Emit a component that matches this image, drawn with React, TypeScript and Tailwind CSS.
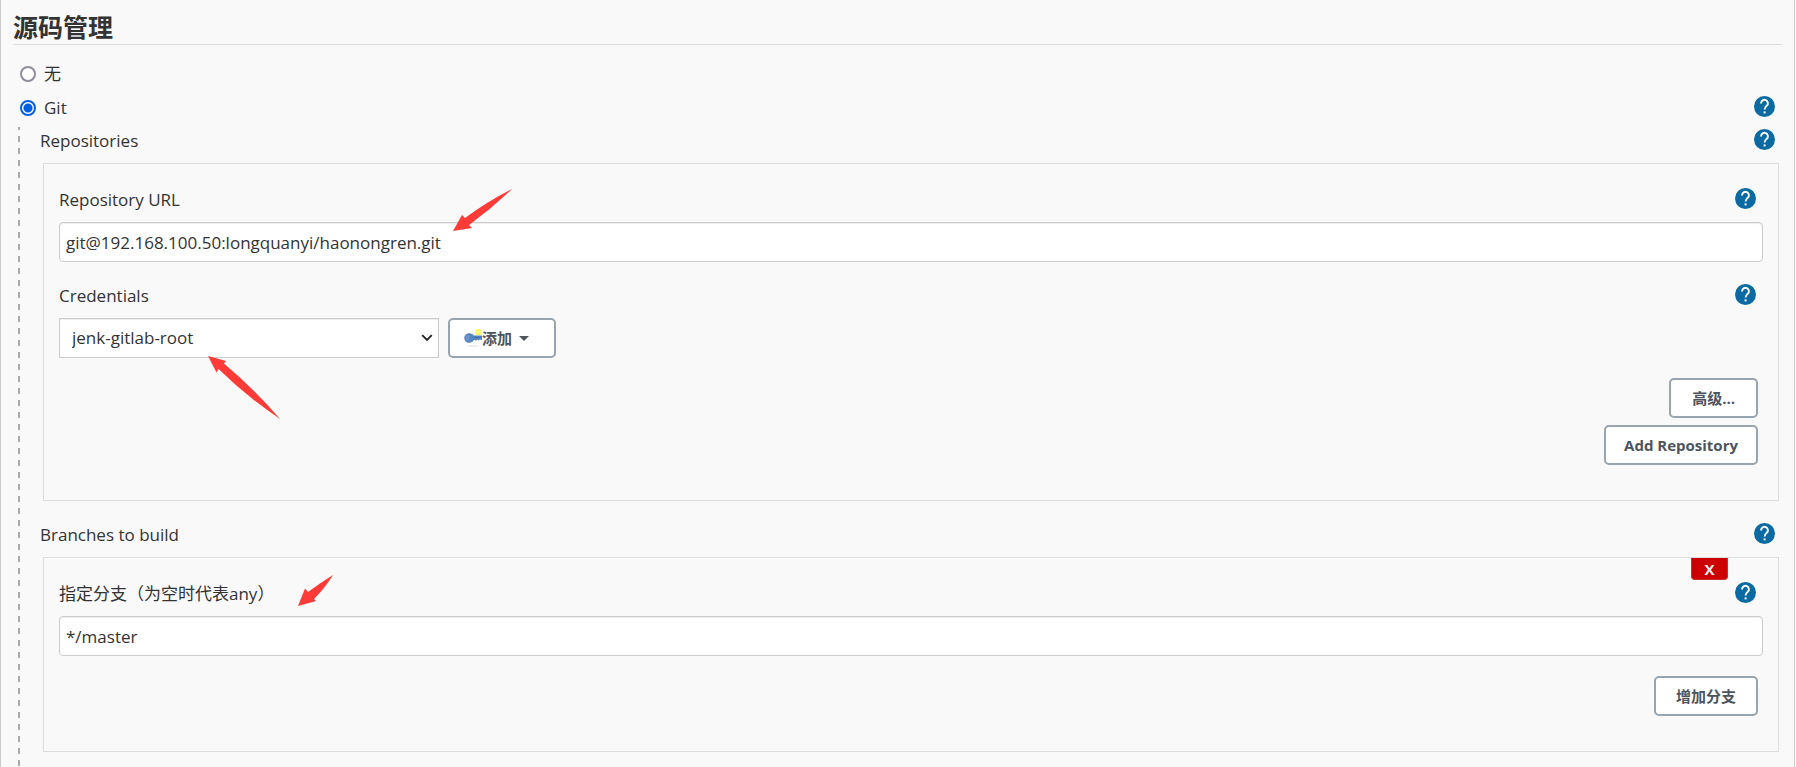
import React from "react";

const baseFont = "font-['Open_Sans','Noto_Sans_CJK_SC',sans-serif]";

function Help({ topic }: { topic: string }) {
  return (
    <a href="#help" aria-label={`Help: ${topic}`} className="mb-1 block size-[21px] shrink-0">
      <svg viewBox="0 0 21 21" className="block size-full">
        <circle cx="10.5" cy="10.5" r="10.5" fill="#0b6aa2" />
        <path
          d="M7.1 7.6V7.1a3.4 3.4 0 1 1 5.8 2.5c-1.3 1.2-2.3 1.9-2.3 4"
          fill="none"
          stroke="#fff"
          strokeWidth="1.9"
        />
        <rect x="9.6" y="15.4" width="2" height="2" fill="#fff" />
      </svg>
    </a>
  );
}

function Button({ children, className = "" }: { children: React.ReactNode; className?: string }) {
  return (
    <button
      type="button"
      className={`flex h-10 items-center rounded-[5px] border-2 border-[#98a4ae] bg-white text-[15px] font-bold text-[#4d545d] ${className}`}
    >
      {children}
    </button>
  );
}

function KeyIcon() {
  return (
    <svg viewBox="0 0 18 18" className="size-[18px]" aria-hidden="true">
      <ellipse cx="9" cy="17" rx="6.5" ry="0.9" fill="#ececec" />
      <circle cx="14.2" cy="3.2" r="3.1" fill="#fdf45c" />
      <circle cx="14.2" cy="3.2" r="1" fill="#fffcd8" />
      <path
        d="M5.2 4.2c2.4 0 3.900 1 4.600 2.200H18V11H16.800L15.800 10.400l-1.300 1.200-1.400-.9-1.200 1-1.200-.6H9.800C9 12.800 7.400 13.800 5.200 13.800 2.200 13.800.3 11.600.3 9S2.200 4.200 5.200 4.200z"
        fill="#5888c2"
      />
      <path d="M9.500 8.400H17.500" stroke="#426fa9" strokeWidth="1.2" />
      <ellipse cx="3.600" cy="8.800" rx="1.800" ry="2.800" fill="#6c97cb" />
    </svg>
  );
}

function Radio({ id, label, checked }: { id: string; label: string; checked?: boolean }) {
  return (
    <div className="flex h-[34px] items-center">
      <input
        id={id}
        type="radio"
        name="scm"
        defaultChecked={checked}
        className="size-4 appearance-none rounded-full border-2 border-[#8f8f9d] bg-white checked:border-[#0060df] checked:bg-[radial-gradient(circle,#0060df_4px,#fff_5px)]"
      />
      <label htmlFor={id} className="pl-2">
        {label}
      </label>
    </div>
  );
}

const fieldClass =
  "block h-10 w-full rounded-[4px] border border-[#ccc] bg-white px-1.5 shadow-[inset_0_1px_1px_rgba(0,0,0,0.075)]";

export default function App() {
  return (
    <main className={`relative mr-px min-h-screen border-x border-[#ccc] bg-[#f9f9f9] px-3 text-[17px] leading-6 text-[#333] ${baseFont}`}>
      <h1 className="flex h-[45px] items-end border-b border-[#ddd] pb-1 text-[25px] leading-[26px] font-bold">源码管理</h1>

      <div className="mt-3 pl-[7px]">
        <Radio id="scm-none" label="无" />
        <div className="flex items-center justify-between pr-[7px]">
          <Radio id="scm-git" label="Git" checked />
          <Help topic="Git" />
        </div>
      </div>

      <div className="ml-[5px] flex">
        <div className="mt-0.5 w-0.5 bg-[repeating-linear-gradient(to_bottom,#aaa_0,#aaa_3px,transparent_3px,transparent_9px,#aaa_9px,#aaa_12px)]" />
        <div className="min-w-0 flex-1 pb-4 pl-5">
          <div className="flex h-8 items-center justify-between pr-[7px]">
            <h2>Repositories</h2>
            <Help topic="Repositories" />
          </div>
          <section className="mx-[3px] mt-1.5 border border-[#ddd] px-[15px] pt-6 pb-[35px]">
            <div className="flex h-6 items-center justify-between pr-[7px]">
              <label htmlFor="repo-url">Repository URL</label>
              <Help topic="Repository URL" />
            </div>
            <input id="repo-url" type="text" defaultValue="git@192.168.100.50:longquanyi/haonongren.git" className={`mt-2.5 ${fieldClass}`} />
            <div className="mt-[22px] flex h-6 items-center justify-between pr-[7px]">
              <label htmlFor="credentials">Credentials</label>
              <Help topic="Credentials" />
            </div>
            <div className="mt-2.5 flex gap-[9px]">
              <div className="relative">
                <select
                  id="credentials"
                  className="h-10 w-[380px] appearance-none border border-[#ccc] bg-white pl-3 shadow-[inset_0_1px_1px_rgba(0,0,0,0.075)]"
                >
                  <option>jenk-gitlab-root</option>
                </select>
                <svg viewBox="0 0 12 8" className="pointer-events-none absolute top-4 right-[6px] h-2 w-3" aria-hidden="true">
                  <path d="M1.2 1.2 6 6l4.8-4.8" fill="none" stroke="#222" strokeWidth="1.8" />
                </svg>
              </div>
              <Button className="w-[108px] pl-3.5">
                <KeyIcon />
                添加
                <svg viewBox="0 0 10 5" className="ml-[7px] h-[5px] w-2.5" aria-hidden="true">
                  <path d="M0 0h10L5 5z" fill="#4d545d" />
                </svg>
              </Button>
            </div>
            <div className="mt-5 flex flex-col items-end gap-[7px] pr-[5px]">
              <Button className="px-[21px]">高级...</Button>
              <Button className="px-[18px]">Add Repository</Button>
            </div>
          </section>

          <div className="mt-[18px] flex h-8 items-center justify-between pr-[7px]">
            <h2>Branches to build</h2>
            <Help topic="Branches to build" />
          </div>
          <section className="relative mx-[3px] mt-1.5 border border-[#ddd] px-[15px] pt-6 pb-[35px]">
            <button
              type="button"
              className="absolute top-0 right-[50px] h-[22px] w-[37px] rounded-b-[4px] border border-t-0 border-[#c9302c] bg-[#c00] text-[15px] leading-5 font-bold text-[#eee]"
            >
              X
            </button>
            <div className="flex h-6 items-center justify-between pr-[7px]">
              <label htmlFor="branch">指定分支（为空时代表any）</label>
              <Help topic="指定分支" />
            </div>
            <input id="branch" type="text" defaultValue="*/master" className={`mt-2.5 ${fieldClass}`} />
            <div className="mt-5 flex justify-end pr-[5px]">
              <Button className="px-5">增加分支</Button>
            </div>
          </section>
        </div>
      </div>

      <svg className="pointer-events-none absolute top-0 left-0 h-[640px] w-[560px]" viewBox="1 0 560 640" fill="#ff3b38" aria-hidden="true">
        <path d="M453 231 462 215 465 218Q488 201 512 189Q492 208 469 225L472 228Z" />
        <path d="M208 356 226 361 224 363.5Q254 389 280 419Q246 396 218.5 369L216.5 372.5Z" />
        <path d="M298 606 305 588.5 308 592Q320 583 333 575Q325 588 314 599L316 601Z" />
      </svg>
    </main>
  );
}
